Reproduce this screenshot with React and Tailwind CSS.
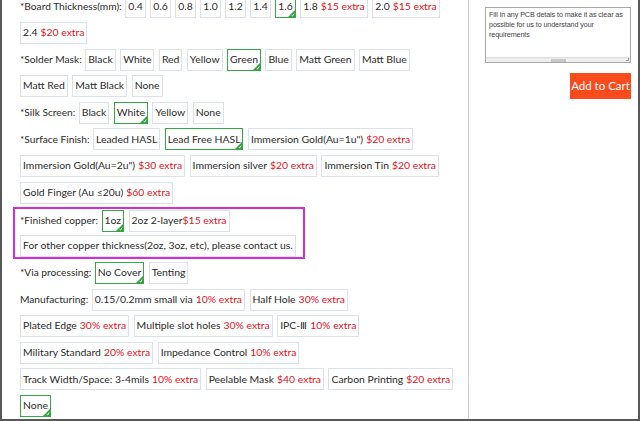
import React from "react";

const Check = () => (
  <svg
    width="7"
    height="7"
    viewBox="0 0 7 7"
    className="absolute right-0 bottom-0"
  >
    <polygon points="7,0 7,7 0,7" fill="#2ea43a" />
    <polyline
      points="3.6,5.2 4.6,6 6.2,3.6"
      fill="none"
      stroke="#fff"
      strokeWidth="0.9"
    />
  </svg>
);

const Opt = ({ text, extra, sel, tight }) => (
  <div
    className={
      "relative h-[22px] flex items-center px-[2px] border whitespace-nowrap text-[10.4px] " +
      (sel ? "border-[#35a845]" : "border-[#dbe2ea]")
    }
  >
    <span className="text-[#2b2b2b]">{text}</span>
    {extra && (
      <span className={"text-[#e2101c] " + (tight ? "" : "ml-[3px]")}>
        {extra}
      </span>
    )}
    {sel && <Check />}
  </div>
);

const Row = ({ label, children }) => (
  <div className="flex items-center gap-[4.5px]">
    {label && (
      <span className="text-[#2b2b2b] whitespace-nowrap mr-[-1px]">{label}</span>
    )}
    {children}
  </div>
);

export default function App() {
  return (
    <div className="w-[640px] h-[421px] overflow-hidden bg-white flex border-l-2 border-r-2 border-b-2 border-[#575757] font-['Lato','Liberation_Sans',sans-serif] text-[10.2px]">
      <div className="w-[467px] shrink-0 border-r border-[#cfcfcf] pl-[18px]">
        <div className="-mt-[4.5px] flex flex-col gap-[4.6px]">
          <Row label="*Board Thickness(mm):">
            <Opt text="0.4" />
            <Opt text="0.6" />
            <Opt text="0.8" />
            <Opt text="1.0" />
            <Opt text="1.2" />
            <Opt text="1.4" />
            <Opt text="1.6" sel />
            <Opt text="1.8" extra="$15 extra" />
            <Opt text="2.0" extra="$15 extra" />
          </Row>
          <Row>
            <Opt text="2.4" extra="$20 extra" />
          </Row>
          <Row label="*Solder Mask:">
            <Opt text="Black" />
            <Opt text="White" />
            <Opt text="Red" />
            <Opt text="Yellow" />
            <Opt text="Green" sel />
            <Opt text="Blue" />
            <Opt text="Matt Green" />
            <Opt text="Matt Blue" />
          </Row>
          <Row>
            <Opt text="Matt Red" />
            <Opt text="Matt Black" />
            <Opt text="None" />
          </Row>
          <Row label="*Silk Screen:">
            <Opt text="Black" />
            <Opt text="White" sel />
            <Opt text="Yellow" />
            <Opt text="None" />
          </Row>
          <Row label="*Surface Finish:">
            <Opt text="Leaded HASL" />
            <Opt text="Lead Free HASL" sel />
            <Opt text={'Immersion Gold(Au=1u")'} extra="$20 extra" />
          </Row>
          <Row>
            <Opt text={'Immersion Gold(Au=2u")'} extra="$30 extra" />
            <Opt text="Immersion silver" extra="$20 extra" />
            <Opt text="Immersion Tin" extra="$20 extra" />
          </Row>
          <Row>
            <Opt text="Gold Finger (Au ≤20u)" extra="$60 extra" />
          </Row>
          <div className="-my-[1.6px] -ml-[7px] w-[292px] border-2 border-[#d22fd2] pl-[5px] pt-[1.3px] flex flex-col gap-[3px]">
            <Row label="*Finished copper:">
              <Opt text="1oz" sel />
              <Opt text="2oz 2-layer" extra="$15 extra" tight />
            </Row>
            <Row>
              <Opt text="For other copper thickness(2oz, 3oz, etc), please contact us." />
            </Row>
          </div>
          <Row label="*Via processing:">
            <Opt text="No Cover" sel />
            <Opt text="Tenting" />
          </Row>
          <Row label="Manufacturing:">
            <Opt text="0.15/0.2mm small via" extra="10% extra" />
            <Opt text="Half Hole" extra="30% extra" />
          </Row>
          <Row>
            <Opt text="Plated Edge" extra="30% extra" />
            <Opt text="Multiple slot holes" extra="30% extra" />
            <Opt text="IPC-Ⅲ" extra="10% extra" />
          </Row>
          <Row>
            <Opt text="Military Standard" extra="20% extra" />
            <Opt text="Impedance Control" extra="10% extra" />
          </Row>
          <Row>
            <Opt text="Track Width/Space: 3-4mils" extra="10% extra" />
            <Opt text="Peelable Mask" extra="$40 extra" />
            <Opt text="Carbon Printing" extra="$20 extra" />
          </Row>
          <Row>
            <Opt text="None" sel />
          </Row>
        </div>
      </div>
      <div className="flex-1 pl-[16px] pr-[6px] pt-[7px] flex flex-col items-end">
        <div className="w-[146px] h-[56px] border border-[#a8a8a8] flex flex-col self-start">
          <div className="flex-1 pl-[3px] pr-[1px] pt-[2px] text-[7.2px] tracking-[-0.1px] leading-[10px] text-[#444] font-['Liberation_Sans',sans-serif]">
            Fill in any PCB detais to make it as clear as possible for us to understand your requirements
          </div>
          <div className="relative h-[5px] bg-[#eeeeee] border-t border-[#dcdcdc] flex justify-center items-center">
            <div className="w-[15px] h-[3px] bg-[#c8c8c8]" />
            <div className="absolute right-[1px] bottom-[1px] w-[3px] h-[3px] border-r border-b border-[#999]" />
          </div>
        </div>
        <button className="mt-[10px] mr-[1px] w-[61px] h-[26px] px-0 whitespace-nowrap bg-[#fb4a1b] text-white text-[11.5px] font-['Lato',sans-serif]">
          Add to Cart
        </button>
      </div>
    </div>
  );
}
